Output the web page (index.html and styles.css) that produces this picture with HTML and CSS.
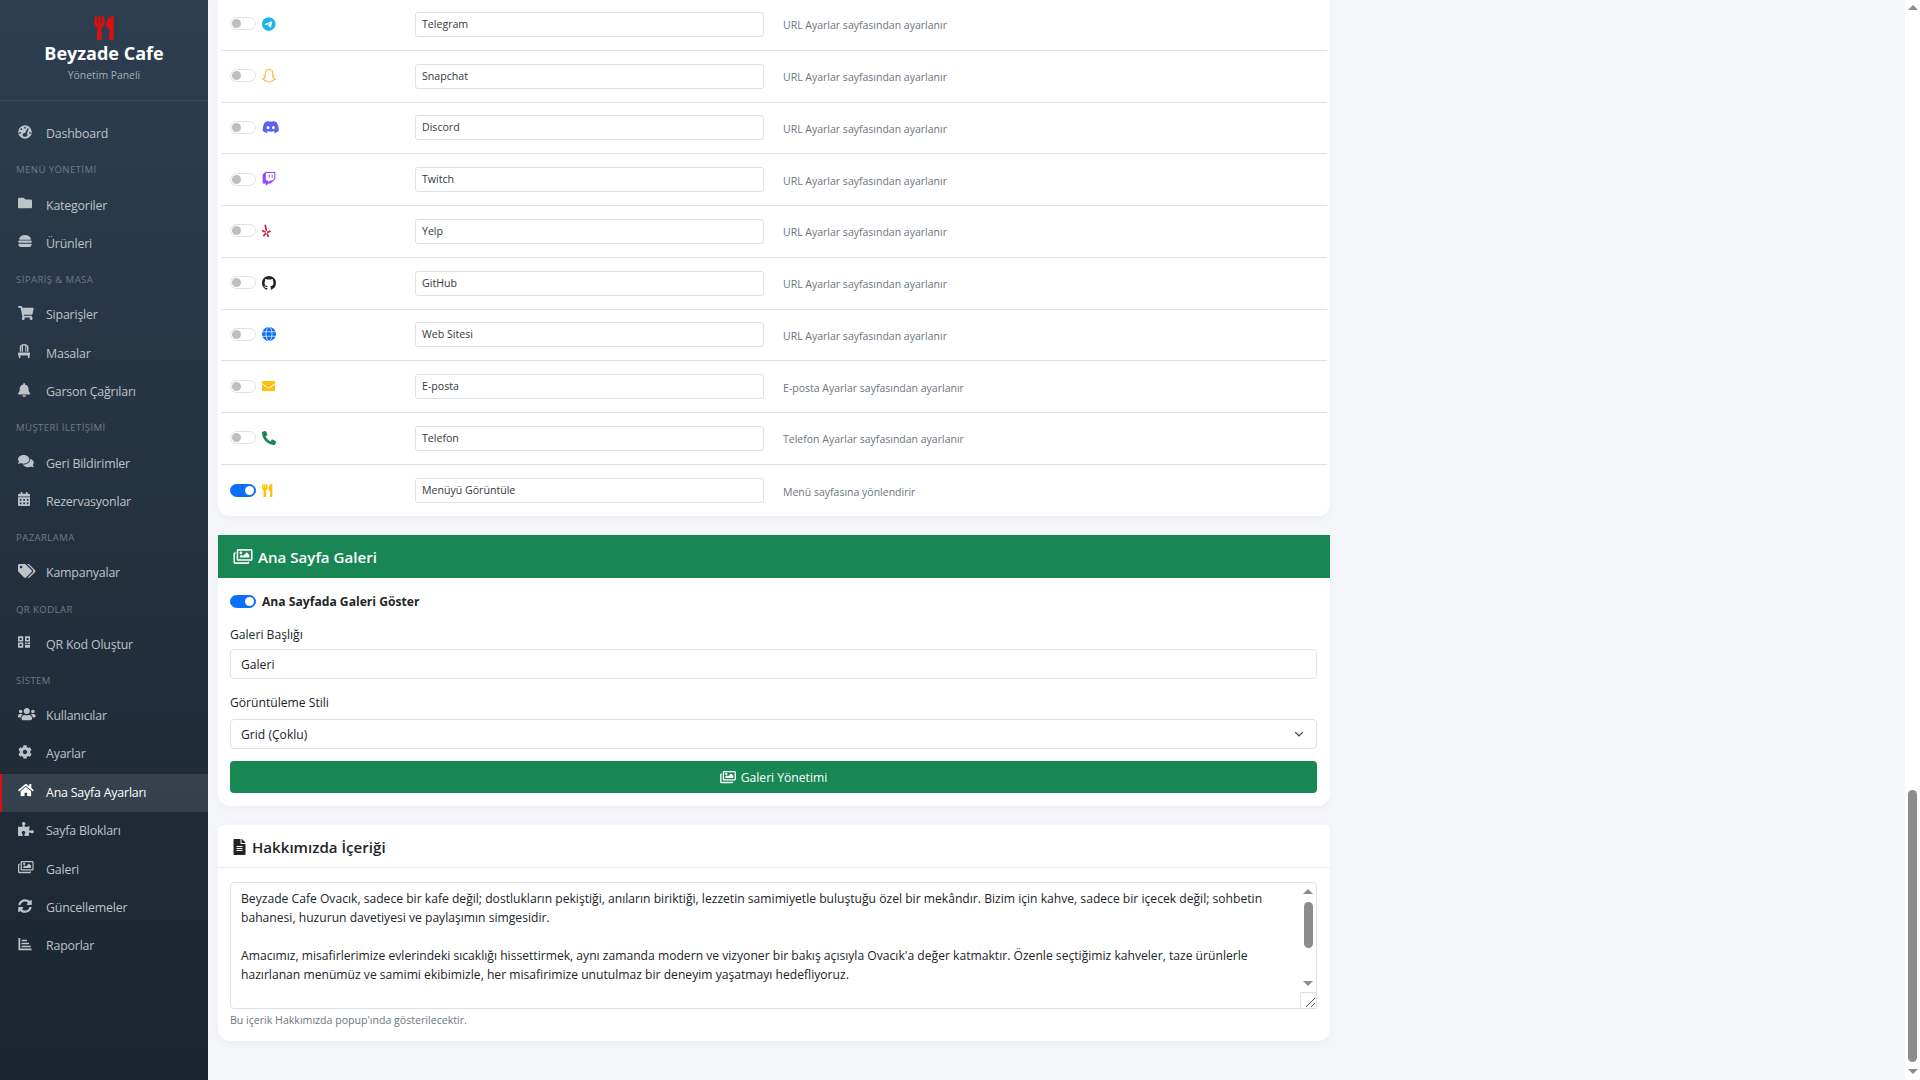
FILE: index.html
```html
<!DOCTYPE html>
<html lang="tr">
<head>
    <meta charset="UTF-8">
    <title>Ana Sayfa Ayarları - Beyzade Cafe</title>
    <link rel="stylesheet" href="styles.css">
</head>
<body>

    <svg class="sprite" xmlns="http://www.w3.org/2000/svg">
        <symbol id="i-utensils" viewBox="0 0 416 512"><path d="M207.9 15.2c.8 4.7 16.1 94.5 16.1 128.8 0 52.3-27.8 89.6-68.9 104.6L168 486.7c.7 13.7-10.2 25.3-24 25.3H80c-13.7 0-24.7-11.5-24-25.3l12.9-238.1C27.7 233.6 0 196.2 0 144 0 109.6 15.3 19.9 16.1 15.2 19.3-5.1 61.4-5.4 64 16.3v141.2c1.3 3.4 15.1 3.2 16 0 1.4-25.3 7.9-139.2 8-141.8 3.3-20.8 44.7-20.8 47.9 0 .2 2.7 6.6 116.5 8 141.8.9 3.2 14.8 3.4 16 0V16.3c2.6-21.6 44.8-21.4 48-1.1zm119.2 285.7l-15 185.1c-1.2 14 9.9 26 23.9 26h56c13.3 0 24-10.7 24-24V24c0-13.2-10.7-24-24-24-82.5 0-221.4 178.5-64.9 300.9z"/></symbol>
        <symbol id="i-images" viewBox="0 0 576 512"><path d="M480 416v16c0 26.51-21.49 48-48 48H48c-26.51 0-48-21.49-48-48V176c0-26.51 21.49-48 48-48h16v48H54a6 6 0 0 0-6 6v244a6 6 0 0 0 6 6h372a6 6 0 0 0 6-6v-10h48zm42-336H150a6 6 0 0 0-6 6v244a6 6 0 0 0 6 6h372a6 6 0 0 0 6-6V86a6 6 0 0 0-6-6zm6-48c26.51 0 48 21.49 48 48v256c0 26.51-21.49 48-48 48H144c-26.51 0-48-21.49-48-48V80c0-26.51 21.49-48 48-48h384zM264 144c0 22.091-17.909 40-40 40s-40-17.909-40-40 17.909-40 40-40 40 17.909 40 40zm-72 96l39.515-39.515c4.686-4.686 12.284-4.686 16.971 0L288 240l103.515-103.515c4.686-4.686 12.284-4.686 16.971 0L480 208v80H192v-48z"/></symbol>
    </svg>

    <div class="sidebar">
        <div class="brand">
            <svg class="brand-icon"><use href="#i-utensils"/></svg>
            <div class="brand-name">Beyzade Cafe</div>
            <div class="brand-sub">Yönetim Paneli</div>
        </div>

        <nav class="nav">
            <a class="nav-item"><span class="nav-icon"><svg viewBox="0 0 512 512"><path fill-rule="evenodd" d="M256 8a248 248 0 1 0 0 496 248 248 0 0 0 0-496zM256 64a32 32 0 1 1 0 64 32 32 0 0 1 0-64zM120 120a32 32 0 1 1 0 64 32 32 0 0 1 0-64zM72 256a32 32 0 1 1 0 64 32 32 0 0 1 0-64zM440 256a32 32 0 1 1 0 64 32 32 0 0 1 0-64zM372 118c14 5 21 19 17 32l-62 170c10 12 17 28 17 44 0 36-39 68-88 68s-88-32-88-68c0-44 44-78 92-72l80-158c6-13 20-20 32-16z"/></svg></span>Dashboard</a>

            <div class="nav-section">Menü Yönetimi</div>
            <a class="nav-item"><span class="nav-icon"><svg viewBox="0 0 512 512"><path d="M464 128H272l-64-64H48C21.49 64 0 85.49 0 112v288c0 26.51 21.49 48 48 48h416c26.51 0 48-21.49 48-48V176c0-26.51-21.49-48-48-48z"/></svg></span>Kategoriler</a>
            <a class="nav-item"><span class="nav-icon"><svg viewBox="0 0 512 512"><path d="M256 40C150 40 62 92 40 176c-5 20 8 32 26 32h380c18 0 31-12 26-32C450 92 362 40 256 40zM48 240a40 40 0 0 0 0 80h416a40 40 0 0 0 0-80zM32 352a16 16 0 0 0-16 16v24c0 44 36 80 80 80h320c44 0 80-36 80-80v-24a16 16 0 0 0-16-16z"/></svg></span>Ürünleri</a>

            <div class="nav-section">Sipariş &amp; Masa</div>
            <a class="nav-item"><span class="nav-icon"><svg viewBox="0 0 576 512"><path d="M528.12 301.319l47.273-208C578.806 78.301 567.391 64 551.99 64H159.208l-9.166-44.81C147.758 8.021 137.93 0 126.529 0H24C10.745 0 0 10.745 0 24v16c0 13.255 10.745 24 24 24h69.883l70.248 343.435C147.325 417.1 136 435.222 136 456c0 30.928 25.072 56 56 56s56-25.072 56-56c0-15.674-6.447-29.835-16.824-40h209.647C430.447 426.165 424 440.326 424 456c0 30.928 25.072 56 56 56s56-25.072 56-56c0-22.172-12.888-41.332-31.579-50.405l5.517-24.276c3.413-15.018-8.002-29.319-23.403-29.319H218.117l-6.545-32h293.145c11.206 0 20.92-7.754 23.403-18.681z"/></svg></span>Siparişler</a>
            <a class="nav-item"><span class="nav-icon"><svg viewBox="0 0 448 512"><path d="M224 0C130 0 64 50 64 130v150h56V130c0-24 8-44 24-58v208h40V58c13-3 26-4 40-4s27 1 40 4v222h40V72c16 14 24 34 24 58v150h56V130C384 50 318 0 224 0zM32 312c-18 0-32 14-32 32v48c0 12 9 24 24 24v80c0 9 7 16 16 16h32c9 0 16-7 16-16v-80h272v80c0 9 7 16 16 16h32c9 0 16-7 16-16v-80c15 0 24-12 24-24v-48c0-18-14-32-32-32z"/></svg></span>Masalar</a>
            <a class="nav-item"><span class="nav-icon"><svg viewBox="0 0 448 512"><path d="M224 512c35.32 0 63.97-28.65 63.97-64H160.03c0 35.35 28.65 64 63.97 64zm215.39-149.71c-19.32-20.76-55.47-51.99-55.47-154.29 0-77.7-54.48-139.9-127.94-155.16V32c0-17.67-14.32-32-31.98-32s-31.98 14.33-31.98 32v20.84C118.56 68.1 64.08 130.3 64.08 208c0 102.3-36.15 133.53-55.47 154.29-6 6.45-8.66 14.16-8.61 21.71.11 16.4 12.98 32 32.1 32h383.8c19.12 0 32-15.6 32.1-32 .05-7.55-2.61-15.27-8.61-21.71z"/></svg></span>Garson Çağrıları</a>

            <div class="nav-section">Müşteri İletişimi</div>
            <a class="nav-item"><span class="nav-icon"><svg viewBox="0 0 576 512"><path d="M416 192c0-88.4-93.1-160-208-160S0 103.6 0 192c0 34.3 14.1 65.9 38 92-13.4 30.2-35.5 54.2-35.8 54.5-2.2 2.3-2.8 5.7-1.5 8.7S4.8 352 8 352c36.6 0 66.9-12.3 88.7-25 32.2 15.7 70.3 25 111.3 25 114.9 0 208-71.6 208-160zm122 220c23.9-26 38-57.7 38-92 0-66.9-53.5-124.2-129.3-148.1.9 6.6 1.3 13.3 1.3 20.1 0 105.9-107.7 192-240 192-10.8 0-21.3-.8-31.7-1.9C207.8 439.6 281.8 480 368 480c41 0 79.1-9.2 111.3-25 21.8 12.7 52.1 25 88.7 25 3.2 0 6.1-1.9 7.3-4.8 1.3-2.9.7-6.3-1.5-8.7-.3-.3-22.4-24.2-35.8-54.5z"/></svg></span>Geri Bildirimler</a>
            <a class="nav-item"><span class="nav-icon"><svg viewBox="0 0 448 512"><path d="M0 464c0 26.5 21.5 48 48 48h352c26.5 0 48-21.5 48-48V192H0v272zm320-196c0-6.6 5.4-12 12-12h40c6.6 0 12 5.4 12 12v40c0 6.6-5.4 12-12 12h-40c-6.6 0-12-5.4-12-12v-40zm0 128c0-6.6 5.4-12 12-12h40c6.6 0 12 5.4 12 12v40c0 6.6-5.4 12-12 12h-40c-6.6 0-12-5.4-12-12v-40zM192 268c0-6.6 5.4-12 12-12h40c6.6 0 12 5.4 12 12v40c0 6.6-5.4 12-12 12h-40c-6.6 0-12-5.4-12-12v-40zm0 128c0-6.6 5.4-12 12-12h40c6.6 0 12 5.4 12 12v40c0 6.6-5.4 12-12 12h-40c-6.6 0-12-5.4-12-12v-40zM64 268c0-6.6 5.4-12 12-12h40c6.6 0 12 5.4 12 12v40c0 6.6-5.4 12-12 12H76c-6.6 0-12-5.4-12-12v-40zm0 128c0-6.6 5.4-12 12-12h40c6.6 0 12 5.4 12 12v40c0 6.6-5.4 12-12 12H76c-6.6 0-12-5.4-12-12v-40zM400 64h-48V16c0-8.8-7.2-16-16-16h-32c-8.8 0-16 7.2-16 16v48H160V16c0-8.8-7.2-16-16-16h-32c-8.8 0-16 7.2-16 16v48H48C21.5 64 0 85.5 0 112v48h448v-48c0-26.5-21.5-48-48-48z"/></svg></span>Rezervasyonlar</a>

            <div class="nav-section">Pazarlama</div>
            <a class="nav-item"><span class="nav-icon"><svg viewBox="0 0 640 512"><path d="M497.941 225.941L286.059 14.059A48 48 0 0 0 252.118 0H48C21.49 0 0 21.49 0 48v204.118a48 48 0 0 0 14.059 33.941l211.882 211.882c18.744 18.745 49.136 18.746 67.882 0l204.118-204.118c18.745-18.745 18.745-49.137 0-67.882zM112 160c-26.51 0-48-21.49-48-48s21.49-48 48-48 48 21.49 48 48-21.49 48-48 48zm513.941 133.823L421.823 497.941c-18.745 18.745-49.137 18.745-67.882 0l-.36-.36L527.64 323.522c16.999-16.999 26.36-39.6 26.36-63.64s-9.362-46.641-26.36-63.64L331.397 0h48.721a48 48 0 0 1 33.941 14.059l211.882 211.882c18.745 18.745 18.745 49.137 0 67.882z"/></svg></span>Kampanyalar</a>

            <div class="nav-section">QR Kodlar</div>
            <a class="nav-item"><span class="nav-icon"><svg viewBox="0 0 448 512"><path fill-rule="evenodd" d="M0 48h192v192H0zM60 108v72h72v-72zM256 48h192v192H256zM316 108v72h72v-72zM0 272h192v192H0zM60 332v72h72v-72zM256 272h64v64h-64zM352 272h96v64h-96zM256 368h192v96H256z"/></svg></span>QR Kod Oluştur</a>

            <div class="nav-section">Sistem</div>
            <a class="nav-item"><span class="nav-icon"><svg viewBox="0 0 640 512"><path d="M96 224c35.3 0 64-28.7 64-64s-28.7-64-64-64-64 28.7-64 64 28.7 64 64 64zm448 0c35.3 0 64-28.7 64-64s-28.7-64-64-64-64 28.7-64 64 28.7 64 64 64zm32 32h-64c-17.6 0-33.5 7.1-45.1 18.6 40.3 22.1 68.9 62 75.1 109.4h66c17.7 0 32-14.3 32-32v-32c0-35.3-28.7-64-64-64zm-256 0c61.9 0 112-50.1 112-112S381.9 32 320 32 208 82.1 208 144s50.1 112 112 112zm76.8 32h-8.3c-20.8 10-43.9 16-68.5 16s-47.6-6-68.5-16h-8.3C179.6 288 128 339.6 128 403.2V432c0 26.5 21.5 48 48 48h288c26.5 0 48-21.5 48-48v-28.8c0-63.6-51.6-115.2-115.2-115.2zm-223.7-13.4C161.5 263.1 145.6 256 128 256H64c-35.3 0-64 28.7-64 64v32c0 17.7 14.3 32 32 32h65.9c6.3-47.4 34.9-87.3 75.2-109.4z"/></svg></span>Kullanıcılar</a>
            <a class="nav-item"><span class="nav-icon"><svg viewBox="0 0 512 512"><path d="M487.4 315.7l-42.6-24.6c4.3-23.2 4.3-47 0-70.2l42.6-24.6c4.9-2.8 7.1-8.6 5.5-14-11.1-35.6-30-67.8-54.7-94.6-3.8-4.1-10-5.1-14.8-2.3L380.8 110c-17.9-15.4-38.5-27.3-60.8-35.1V25.8c0-5.6-3.9-10.5-9.4-11.7-36.7-8.2-74.3-7.8-109.2 0-5.5 1.2-9.4 6.1-9.4 11.7V75c-22.2 7.9-42.8 19.8-60.8 35.1L88.7 85.5c-4.9-2.8-11-1.9-14.8 2.3-24.7 26.7-43.6 58.9-54.7 94.6-1.7 5.4.6 11.2 5.5 14L67.3 221c-4.3 23.2-4.3 47 0 70.2l-42.6 24.6c-4.9 2.8-7.1 8.6-5.5 14 11.1 35.6 30 67.8 54.7 94.6 3.8 4.1 10 5.1 14.8 2.3l42.6-24.6c17.9 15.4 38.5 27.3 60.8 35.1v49.2c0 5.6 3.9 10.5 9.4 11.7 36.7 8.2 74.3 7.8 109.2 0 5.5-1.2 9.4-6.1 9.4-11.7v-49.2c22.2-7.9 42.8-19.8 60.8-35.1l42.6 24.6c4.9 2.8 11 1.9 14.8-2.3 24.7-26.7 43.6-58.9 54.7-94.6 1.5-5.5-.7-11.3-5.6-14.1zM256 336c-44.1 0-80-35.9-80-80s35.9-80 80-80 80 35.9 80 80-35.9 80-80 80z"/></svg></span>Ayarlar</a>
            <a class="nav-item active"><span class="nav-icon"><svg viewBox="0 0 576 512"><path d="M280.37 148.26L96 300.11V464a16 16 0 0 0 16 16l112.06-.29a16 16 0 0 0 15.92-16V368a16 16 0 0 1 16-16h64a16 16 0 0 1 16 16v95.64a16 16 0 0 0 16 16.05L464 480a16 16 0 0 0 16-16V300L295.67 148.26a12.19 12.19 0 0 0-15.3 0zM571.6 251.47L488 182.56V44.05a12 12 0 0 0-12-12h-56a12 12 0 0 0-12 12v72.61L318.47 43a48 48 0 0 0-61 0L4.34 251.47a12 12 0 0 0-1.6 16.9l25.5 31A12 12 0 0 0 45.15 301l235.22-193.74a12.19 12.19 0 0 1 15.3 0L530.9 301a12 12 0 0 0 16.9-1.6l25.5-31a12 12 0 0 0-1.7-16.93z"/></svg></span>Ana Sayfa Ayarları</a>
            <a class="nav-item"><span class="nav-icon"><svg viewBox="0 0 576 512"><path d="M519.442 288.651c-41.519 0-59.5 31.593-82.058 31.593C377.409 320.244 432 144 432 144s-196.288 80-196.288-3.297c0-35.827 36.288-46.25 36.288-85.985C272 19.216 243.885 0 210.539 0c-34.654 0-66.366 18.891-66.366 56.346 0 41.364 31.711 59.277 31.711 81.75C175.885 207.719 0 166.758 0 166.758v333.237s178.635 41.047 178.635-28.662c0-22.473-40-40.107-40-81.471 0-37.456 29.25-56.346 63.577-56.346 33.673 0 61.788 19.216 61.788 54.717 0 39.735-36.288 50.158-36.288 85.985 0 60.803 129.675 25.73 181.23 25.73 0 0-34.725-120.101 25.827-120.101 35.962 0 46.423 36.152 86.308 36.152C556.712 416 576 387.99 576 354.443c0-34.199-18.962-65.792-56.558-65.792z"/></svg></span>Sayfa Blokları</a>
            <a class="nav-item"><span class="nav-icon"><svg viewBox="0 0 576 512"><use href="#i-images"/></svg></span>Galeri</a>
            <a class="nav-item"><span class="nav-icon"><svg viewBox="0 0 512 512"><path d="M370.72 133.28C339.458 104.008 298.888 87.962 255.848 88c-77.458.068-144.328 53.178-162.791 126.85-1.344 5.363-6.122 9.15-11.651 9.15H24.103c-7.498 0-13.194-6.807-11.807-14.176C33.933 94.924 134.813 8 256 8c66.448 0 126.791 26.136 171.315 68.685L463.03 40.97C478.149 25.851 504 36.559 504 57.941V192c0 13.255-10.745 24-24 24H345.941c-21.382 0-32.09-25.851-16.971-40.971l41.75-41.749zM32 296h134.059c21.382 0 32.09 25.851 16.971 40.971l-41.75 41.75c31.262 29.273 71.835 45.319 114.876 45.28 77.418-.07 144.315-53.144 162.787-126.849 1.344-5.363 6.122-9.15 11.651-9.15h57.304c7.498 0 13.194 6.807 11.807 14.176C478.067 417.076 377.187 504 256 504c-66.448 0-126.791-26.136-171.315-68.685L48.97 471.03C33.851 486.149 8 475.441 8 454.059V320c0-13.255 10.745-24 24-24z"/></svg></span>Güncellemeler</a>
            <a class="nav-item"><span class="nav-icon"><svg viewBox="0 0 512 512"><path d="M16 32h64v384h416v64H16zM128 96h200v56H128zM128 208h280v56H128zM128 320h340v56H128z"/></svg></span>Raporlar</a>
        </nav>
    </div>

    <div class="main">
        <!-- Sosyal medya satirlari -->
        <div class="card social-card">
            <div class="social-row">
                <div class="social-left"><span class="toggle"></span><svg class="social-icon c-telegram" viewBox="0 0 496 512"><path d="M248,8C111.033,8,0,119.033,0,256S111.033,504,248,504,496,392.967,496,256,384.967,8,248,8ZM362.952,176.66c-3.732,39.215-19.881,134.378-28.1,178.3-3.476,18.584-10.322,24.816-16.948,25.425-14.4,1.326-25.338-9.517-39.287-18.661-21.827-14.308-34.158-23.215-55.346-37.177-24.485-16.135-8.612-25,5.342-39.5,3.652-3.793,67.107-61.51,68.335-66.746.153-.655.3-3.1-1.154-4.384s-3.59-.849-5.135-.5q-3.283.746-104.608,69.142-14.845,10.194-26.894,9.934c-8.855-.191-25.888-5.006-38.551-9.123-15.531-5.048-27.875-7.717-26.8-16.291q.84-6.7,18.45-13.7,108.446-47.248,144.628-62.3c68.872-28.647,83.183-33.623,92.511-33.789,2.052-.034,6.639.474,9.61,2.885a10.452,10.452,0,0,1,3.53,6.716A43.765,43.765,0,0,1,362.952,176.66Z"/></svg></div>
                <div class="field-sm">Telegram</div>
                <div class="row-note">URL Ayarlar sayfasından ayarlanır</div>
            </div>
            <div class="social-row">
                <div class="social-left"><span class="toggle"></span><svg class="social-icon c-snapchat" viewBox="2 2 20 20"><path d="M12 2.8c3.2 0 5.2 2.3 5.2 5.2v2.4l2.1.6c-.2 1-1.2 1.5-2.2 1.8.5 1.6 2 3 4.1 3.7-.4 1-1.8 1.1-3.1 1.4-.3 1-.6 1.3-2 1.1-1.6.1-2.6 1.9-4.1 1.9s-2.5-1.8-4.1-1.9c-1.4.2-1.7-.1-2-1.1-1.3-.3-2.7-.4-3.1-1.4 2.1-.7 3.6-2.1 4.1-3.7-1-.3-2-.8-2.2-1.8l2.1-.6V8c0-2.9 2-5.2 5.2-5.2z"/></svg></div>
                <div class="field-sm">Snapchat</div>
                <div class="row-note">URL Ayarlar sayfasından ayarlanır</div>
            </div>
            <div class="social-row">
                <div class="social-left"><span class="toggle"></span><svg class="social-icon c-discord" viewBox="0 0 640 512"><path d="M524.531,69.836a1.5,1.5,0,0,0-.764-.7A485.065,485.065,0,0,0,404.081,32.03a1.816,1.816,0,0,0-1.923.91,337.461,337.461,0,0,0-14.9,30.6,447.848,447.848,0,0,0-134.426,0,309.541,309.541,0,0,0-15.135-30.6,1.89,1.89,0,0,0-1.924-.91A483.689,483.689,0,0,0,116.085,69.137a1.712,1.712,0,0,0-.788.676C39.068,183.651,18.186,294.69,28.43,404.354a2.016,2.016,0,0,0,.765,1.375A487.666,487.666,0,0,0,176.02,479.918a1.9,1.9,0,0,0,2.063-.676A348.2,348.2,0,0,0,208.12,430.4a1.86,1.86,0,0,0-1.019-2.588,321.173,321.173,0,0,1-45.868-21.853,1.885,1.885,0,0,1-.185-3.126c3.082-2.309,6.166-4.711,9.109-7.137a1.819,1.819,0,0,1,1.9-.256c96.229,43.917,200.41,43.917,295.5,0a1.812,1.812,0,0,1,1.924.233c2.944,2.426,6.027,4.851,9.132,7.16a1.884,1.884,0,0,1-.162,3.126,301.407,301.407,0,0,1-45.89,21.83,1.875,1.875,0,0,0-1,2.611,391.055,391.055,0,0,0,30.014,48.815,1.864,1.864,0,0,0,2.063.7A486.048,486.048,0,0,0,610.7,405.729a1.882,1.882,0,0,0,.765-1.352C623.729,277.594,590.933,167.465,524.531,69.836ZM222.491,337.58c-28.972,0-52.844-26.587-52.844-59.239S193.056,219.1,222.491,219.1c29.665,0,53.306,26.82,52.843,59.239C275.334,310.993,251.924,337.58,222.491,337.58Zm195.38,0c-28.971,0-52.843-26.587-52.843-59.239S388.437,219.1,417.871,219.1c29.667,0,53.307,26.82,52.844,59.239C470.715,310.993,447.538,337.58,417.871,337.58Z"/></svg></div>
                <div class="field-sm">Discord</div>
                <div class="row-note">URL Ayarlar sayfasından ayarlanır</div>
            </div>
            <div class="social-row">
                <div class="social-left"><span class="toggle"></span><svg class="social-icon c-twitch" viewBox="0 0 512 512"><path d="M391.17,103.47H352.54v109.7h38.63ZM285,103H246.37V212.75H285ZM120.83,0,24.31,91.42V420.58H140.14V512l96.53-91.42h77.25L487.69,256V0ZM449.07,237.75l-77.22,73.12H294.61l-67.6,64v-64H140.14V36.58H449.07Z"/></svg></div>
                <div class="field-sm">Twitch</div>
                <div class="row-note">URL Ayarlar sayfasından ayarlanır</div>
            </div>
            <div class="social-row">
                <div class="social-left"><span class="toggle"></span><svg class="social-icon c-yelp" viewBox="0 0 12 18"><path d="M5.6 8 4.2 1.6M3.8 10 1 8.8M4.6 12.4 2.4 15M7 13l1 3M7.6 10.4l2.8-1"/></svg></div>
                <div class="field-sm">Yelp</div>
                <div class="row-note">URL Ayarlar sayfasından ayarlanır</div>
            </div>
            <div class="social-row">
                <div class="social-left"><span class="toggle"></span><svg class="social-icon c-github" viewBox="0 0 16 16"><path d="M8 0C3.58 0 0 3.58 0 8c0 3.54 2.29 6.53 5.47 7.59.4.07.55-.17.55-.38 0-.19-.01-.82-.01-1.49-2.01.37-2.53-.49-2.69-.94-.09-.23-.48-.94-.82-1.13-.28-.15-.68-.52-.01-.53.63-.01 1.08.58 1.23.82.72 1.21 1.87.87 2.33.66.07-.52.28-.87.51-1.07-1.78-.2-3.64-.89-3.64-3.95 0-.87.31-1.59.82-2.15-.08-.2-.36-1.02.08-2.12 0 0 .67-.21 2.2.82.64-.18 1.32-.27 2-.27.68 0 1.36.09 2 .27 1.53-1.04 2.2-.82 2.2-.82.44 1.1.16 1.92.08 2.12.51.56.82 1.27.82 2.15 0 3.07-1.87 3.75-3.65 3.95.29.25.54.73.54 1.48 0 1.07-.01 1.93-.01 2.2 0 .21.15.46.55.38A8.013 8.013 0 0 0 16 8c0-4.42-3.58-8-8-8z"/></svg></div>
                <div class="field-sm">GitHub</div>
                <div class="row-note">URL Ayarlar sayfasından ayarlanır</div>
            </div>
            <div class="social-row">
                <div class="social-left"><span class="toggle"></span><svg class="social-icon c-globe" viewBox="0 0 16 16"><circle cx="8" cy="8" r="8" stroke="none"/><ellipse cx="8" cy="8" rx="3.4" ry="8"/><path d="M0 5.4h16M0 10.6h16"/></svg></div>
                <div class="field-sm">Web Sitesi</div>
                <div class="row-note">URL Ayarlar sayfasından ayarlanır</div>
            </div>
            <div class="social-row">
                <div class="social-left"><span class="toggle"></span><svg class="social-icon c-mail" viewBox="0 64 512 384"><path d="M502.3 190.8c3.9-3.1 9.7-.2 9.7 4.7V400c0 26.5-21.5 48-48 48H48c-26.5 0-48-21.5-48-48V195.6c0-5 5.7-7.8 9.7-4.7 22.4 17.4 52.1 39.5 154.1 113.6 21.1 15.4 56.7 47.8 92.2 47.6 35.7.3 72-32.8 92.3-47.6 102-74.1 131.6-96.3 154-113.7zM256 320c23.2.4 56.6-29.2 73.4-41.4 132.7-96.3 142.8-104.7 173.4-128.7 5.8-4.5 9.2-11.5 9.2-18.9v-19c0-26.5-21.5-48-48-48H48C21.5 64 0 85.5 0 112v19c0 7.4 3.4 14.3 9.2 18.9 30.6 23.9 40.7 32.4 173.4 128.7 16.8 12.2 50.2 41.8 73.4 41.4z"/></svg></div>
                <div class="field-sm">E-posta</div>
                <div class="row-note">E-posta Ayarlar sayfasından ayarlanır</div>
            </div>
            <div class="social-row">
                <div class="social-left"><span class="toggle"></span><svg class="social-icon c-phone" viewBox="0 0 512 512"><path d="M497.39 361.8l-112-48a24 24 0 0 0-28 6.9l-49.6 60.6A370.66 370.66 0 0 1 130.6 204.11l60.6-49.6a23.94 23.94 0 0 0 6.9-28l-48-112A24.16 24.16 0 0 0 122.6.61l-104 24A24 24 0 0 0 0 48c0 256.5 207.9 464 464 464a24 24 0 0 0 23.4-18.6l24-104a24.29 24.29 0 0 0-14.01-27.6z"/></svg></div>
                <div class="field-sm">Telefon</div>
                <div class="row-note">Telefon Ayarlar sayfasından ayarlanır</div>
            </div>
            <div class="social-row last">
                <div class="social-left"><span class="toggle on"></span><svg class="social-icon c-menu" viewBox="0 0 416 512"><use href="#i-utensils"/></svg></div>
                <div class="field-sm">Menüyü Görüntüle</div>
                <div class="row-note">Menü sayfasına yönlendirir</div>
            </div>
        </div>

        <!-- Galeri -->
        <div class="card gallery-card">
            <div class="card-head green"><svg class="head-icon"><use href="#i-images"/></svg>Ana Sayfa Galeri</div>
            <div class="card-body">
                <div class="switch-line"><span class="toggle on"></span><strong>Ana Sayfada Galeri Göster</strong></div>
                <div class="form-label">Galeri Başlığı</div>
                <div class="field">Galeri</div>
                <div class="form-label">Görüntüleme Stili</div>
                <div class="field select">Grid (Çoklu)
                    <svg class="chevron" viewBox="0 0 16 16"><path d="m2 5 6 6 6-6"/></svg>
                </div>
                <div class="btn-green"><svg class="btn-icon"><use href="#i-images"/></svg>Galeri Yönetimi</div>
            </div>
        </div>

        <!-- Hakkimizda -->
        <div class="card about-card">
            <div class="card-head"><svg class="file-icon" viewBox="0 0 384 512"><path d="M224 136V0H24C10.7 0 0 10.7 0 24v464c0 13.3 10.7 24 24 24h336c13.3 0 24-10.7 24-24V160H248c-13.2 0-24-10.8-24-24zm64 236c0 6.6-5.4 12-12 12H108c-6.6 0-12-5.4-12-12v-8c0-6.6 5.4-12 12-12h168c6.6 0 12 5.4 12 12v8zm0-64c0 6.6-5.4 12-12 12H108c-6.6 0-12-5.4-12-12v-8c0-6.6 5.4-12 12-12h168c6.6 0 12 5.4 12 12v8zm0-72v8c0 6.6-5.4 12-12 12H108c-6.6 0-12-5.4-12-12v-8c0-6.6 5.4-12 12-12h168c6.6 0 12 5.4 12 12zm96-114.1v6.1H256V0h6.1c6.4 0 12.5 2.5 17 7l97.9 98c4.5 4.5 7 10.6 7 16.9z"/></svg>Hakkımızda İçeriği</div>
            <div class="card-body about-body">
                <div class="textarea">
                    <div class="textarea-text">Beyzade Cafe Ovacık, sadece bir kafe değil; dostlukların pekiştiği, anıların biriktiği, lezzetin samimiyetle buluştuğu özel bir mekândır. Bizim için kahve, sadece bir içecek değil; sohbetin<br>bahanesi, huzurun davetiyesi ve paylaşımın simgesidir.<br><br>Amacımız, misafirlerimize evlerindeki sıcaklığı hissettirmek, aynı zamanda modern ve vizyoner bir bakış açısıyla Ovacık'a değer katmaktır. Özenle seçtiğimiz kahveler, taze ürünlerle<br>hazırlanan menümüz ve samimi ekibimizle, her misafirimize unutulmaz bir deneyim yaşatmayı hedefliyoruz.</div>
                    <div class="ta-scroll">
                        <span class="arrow-up"></span>
                        <div class="ta-track"><div class="ta-thumb"></div></div>
                        <span class="arrow-down"></span>
                        <div class="ta-resize"><svg viewBox="0 0 15 15"><path d="M5 14 14 5M10 14l4-4"/></svg></div>
                    </div>
                </div>
                <div class="help-text">Bu içerik Hakkımızda popup'ında gösterilecektir.</div>
            </div>
        </div>
    </div>

    <div class="page-scroll">
        <span class="arrow-up"></span>
        <div class="page-track"><div class="page-thumb"></div></div>
        <span class="arrow-down"></span>
    </div>

</body>
</html>
```

FILE: styles.css
```css
* {
    box-sizing: border-box;
}
html, body {
    height: 100%;
}
body {
    margin: 0;
    display: flex;
    height: 1080px;
    overflow: hidden;
    font-family: "Open Sans", "Noto Sans", sans-serif;
    font-size: 12.13px;
    color: #212529;
    background-color: #f4f6fa;
}
.sprite {
    display: none;
}

/* Sidebar */
.sidebar {
    width: 208px;
    flex-shrink: 0;
    color: #bdc3c7;
    background: linear-gradient(180deg, #2c3e50 0%, #1a252f 100%);
}
.brand {
    height: 101px;
    padding-top: 16px;
    text-align: center;
    border-bottom: 1px solid rgba(255, 255, 255, 0.1);
}
.brand-icon {
    display: block;
    width: 20px;
    height: 24px;
    margin: 0 auto;
    fill: #d9100f;
}
.brand-name {
    margin-top: 1px;
    font-size: 18px;
    line-height: 24px;
    font-weight: 700;
    color: #fff;
}
.brand-sub {
    margin-top: 3px;
    font-size: 10.4px;
    line-height: 14px;
    color: #a3adb6;
}
.nav {
    padding-top: 14px;
}
.nav-item {
    display: flex;
    align-items: center;
    height: 38.4px;
    padding-left: 18px;
    padding-bottom: 1px;
    font-size: 12.4px;
    letter-spacing: -0.2px;
    color: #bdc3c7;
}
.nav-item.active {
    color: #fff;
    background-color: rgba(255, 255, 255, 0.1);
    border-left: 2px solid #d9100f;
    padding-left: 16px;
}
.nav-icon {
    width: 28px;
    flex-shrink: 0;
    margin-top: -4px;
}
.nav-icon svg {
    display: block;
    height: 14px;
    width: auto;
    fill: currentColor;
}
.nav-section {
    height: 33px;
    padding: 10px 0 0 16px;
    font-size: 9.6px;
    line-height: 14px;
    letter-spacing: 0.4px;
    text-transform: uppercase;
    color: #6c7a89;
}

/* Main */
.main {
    width: 1697px;
    padding-left: 10px;
    flex-shrink: 0;
}
.card {
    width: 1112px;
    background-color: #fff;
    border-radius: 0 0 12px 12px;
    box-shadow: 0 2px 8px rgba(0, 0, 0, 0.04);
}
.social-card {
    margin-top: -1px;
    height: 517px;
    padding: 0 3px;
}
.gallery-card {
    margin-top: 19px;
    height: 271px;
    overflow: hidden;
}
.about-card {
    margin-top: 19px;
    height: 216px;
    border-radius: 5px 5px 12px 12px;
}
.about-card .card-head {
    padding-top: 1px;
}

/* Sosyal medya */
.social-row {
    display: grid;
    grid-template-columns: 185px 349px 1fr;
    align-items: center;
    height: 51.75px;
    padding-left: 9px;
    border-bottom: 1px solid #dee2e6;
}
.social-row.last {
    border-bottom: none;
}
.social-left {
    display: flex;
    align-items: center;
    gap: 6px;
    margin-top: -1px;
}
.toggle {
    position: relative;
    display: block;
    width: 26px;
    height: 13px;
    flex-shrink: 0;
    border: 1px solid #dee2e6;
    border-radius: 7px;
    background-color: #fff;
}
.toggle::after {
    content: "";
    position: absolute;
    left: 1px;
    top: 1px;
    width: 9px;
    height: 9px;
    border-radius: 50%;
    background-color: #bfbfbf;
}
.toggle.on {
    background-color: #0d6efd;
    border-color: #0d6efd;
}
.toggle.on::after {
    left: auto;
    right: 1px;
    background-color: #fff;
}
.social-icon {
    display: block;
    height: 14px;
    width: auto;
    flex-shrink: 0;
}
.c-telegram { fill: #1fb6e5; }
.c-snapchat { fill: none; stroke: #f5b942; stroke-width: 1.5; overflow: visible; }
.c-discord { fill: #5865f2; }
.c-twitch { fill: #9146ff; }
.c-yelp { fill: none; stroke: #c9283e; stroke-width: 2.2; stroke-linecap: round; }
.c-github { fill: #212529; }
.c-globe { fill: #0d6efd; stroke: #fff; stroke-width: 0.8; }
.c-mail { fill: #ffc107; height: 10px; }
.c-phone { fill: #198754; }
.c-menu { fill: #ffc107; height: 13px; }
.field-sm {
    display: flex;
    align-items: center;
    height: 25px;
    padding: 0 0 1px 6px;
    font-size: 10.6px;
    border: 1px solid #dee2e6;
    border-radius: 3px;
    color: #343a40;
    background-color: #fff;
}
.row-note {
    padding: 2px 0 0 19px;
    font-size: 10.5px;
    color: #6c757d;
}

/* Kart basliklari */
.card-head {
    display: flex;
    align-items: center;
    height: 43px;
    padding-left: 15px;
    font-size: 15.1px;
    font-weight: 600;
    border-bottom: 1px solid #eceef0;
}
.card-head.green {
    color: #fff;
    background-color: #198754;
    border-bottom: none;
}
.head-icon {
    width: 20px;
    height: 17px;
    margin-right: 5px;
    fill: #fff;
}
.file-icon {
    width: 13px;
    height: 16px;
    margin-right: 6px;
    fill: #212529;
}
.card-body {
    padding: 0 13px 0 12px;
}
.switch-line {
    display: flex;
    align-items: center;
    gap: 6px;
    height: 22px;
    margin-top: 12px;
}
.switch-line strong {
    font-weight: 700;
}
.form-label {
    height: 20px;
    margin-top: 14px;
    line-height: 18px;
}
.field + .form-label {
    margin-top: 15px;
}
.field {
    position: relative;
    display: flex;
    align-items: center;
    height: 30px;
    margin-top: 3px;
    padding-left: 10px;
    border: 1px solid #dee2e6;
    border-radius: 4px;
    background-color: #fff;
}
.field.select {
    margin: 5px 0 12px;
}
.chevron {
    position: absolute;
    right: 12px;
    top: 9px;
    width: 10px;
    height: 10px;
    fill: none;
    stroke: #343a40;
    stroke-width: 2;
}
.btn-green {
    display: flex;
    align-items: center;
    justify-content: center;
    height: 32px;
    color: #fff;
    border-radius: 4px;
    background-color: #198754;
}
.btn-icon {
    width: 16px;
    height: 14px;
    margin-right: 5px;
    fill: #fff;
}

/* Hakkimizda */
.about-body {
    padding-top: 14px;
}
.textarea {
    position: relative;
    height: 127px;
    padding: 6px 10px;
    line-height: 19px;
    white-space: nowrap;
    border: 1px solid #dee2e6;
    border-radius: 4px 4px 0 4px;
}
.ta-scroll {
    position: absolute;
    top: 1px;
    right: 0;
    bottom: 0;
    width: 16px;
    display: flex;
    flex-direction: column;
    align-items: center;
    background-color: #fff;
}
.ta-track {
    flex: 1;
    padding-top: 8px;
}
.ta-thumb {
    width: 9px;
    height: 46px;
    border-radius: 5px;
    background-color: #8c8c8c;
}
.arrow-up, .arrow-down {
    display: block;
    width: 0;
    height: 0;
    border-left: 5px solid transparent;
    border-right: 5px solid transparent;
}
.arrow-up {
    margin-top: 5px;
    border-bottom: 5px solid #8c8c8c;
}
.arrow-down {
    margin-bottom: 6px;
    border-top: 5px solid #8c8c8c;
}
.ta-resize {
    width: 16px;
    height: 16px;
    border: 1px solid #dee2e6;
    border-right: none;
    border-bottom: none;
    background-color: #fff;
}
.ta-resize svg {
    display: block;
    width: 15px;
    height: 15px;
    fill: none;
    stroke: #555;
    stroke-width: 1;
}
.help-text {
    margin-top: 4px;
    font-size: 10.6px;
    line-height: 14px;
    color: #6c757d;
}

/* Sayfa kaydirma cubugu */
.page-scroll {
    width: 15px;
    flex-shrink: 0;
    display: flex;
    flex-direction: column;
    align-items: center;
    background-color: #fff;
}
.page-track {
    flex: 1;
    padding-top: 780px;
}
.page-thumb {
    width: 9px;
    height: 272px;
    border-radius: 5px;
    background-color: #8c8c8c;
}
```
